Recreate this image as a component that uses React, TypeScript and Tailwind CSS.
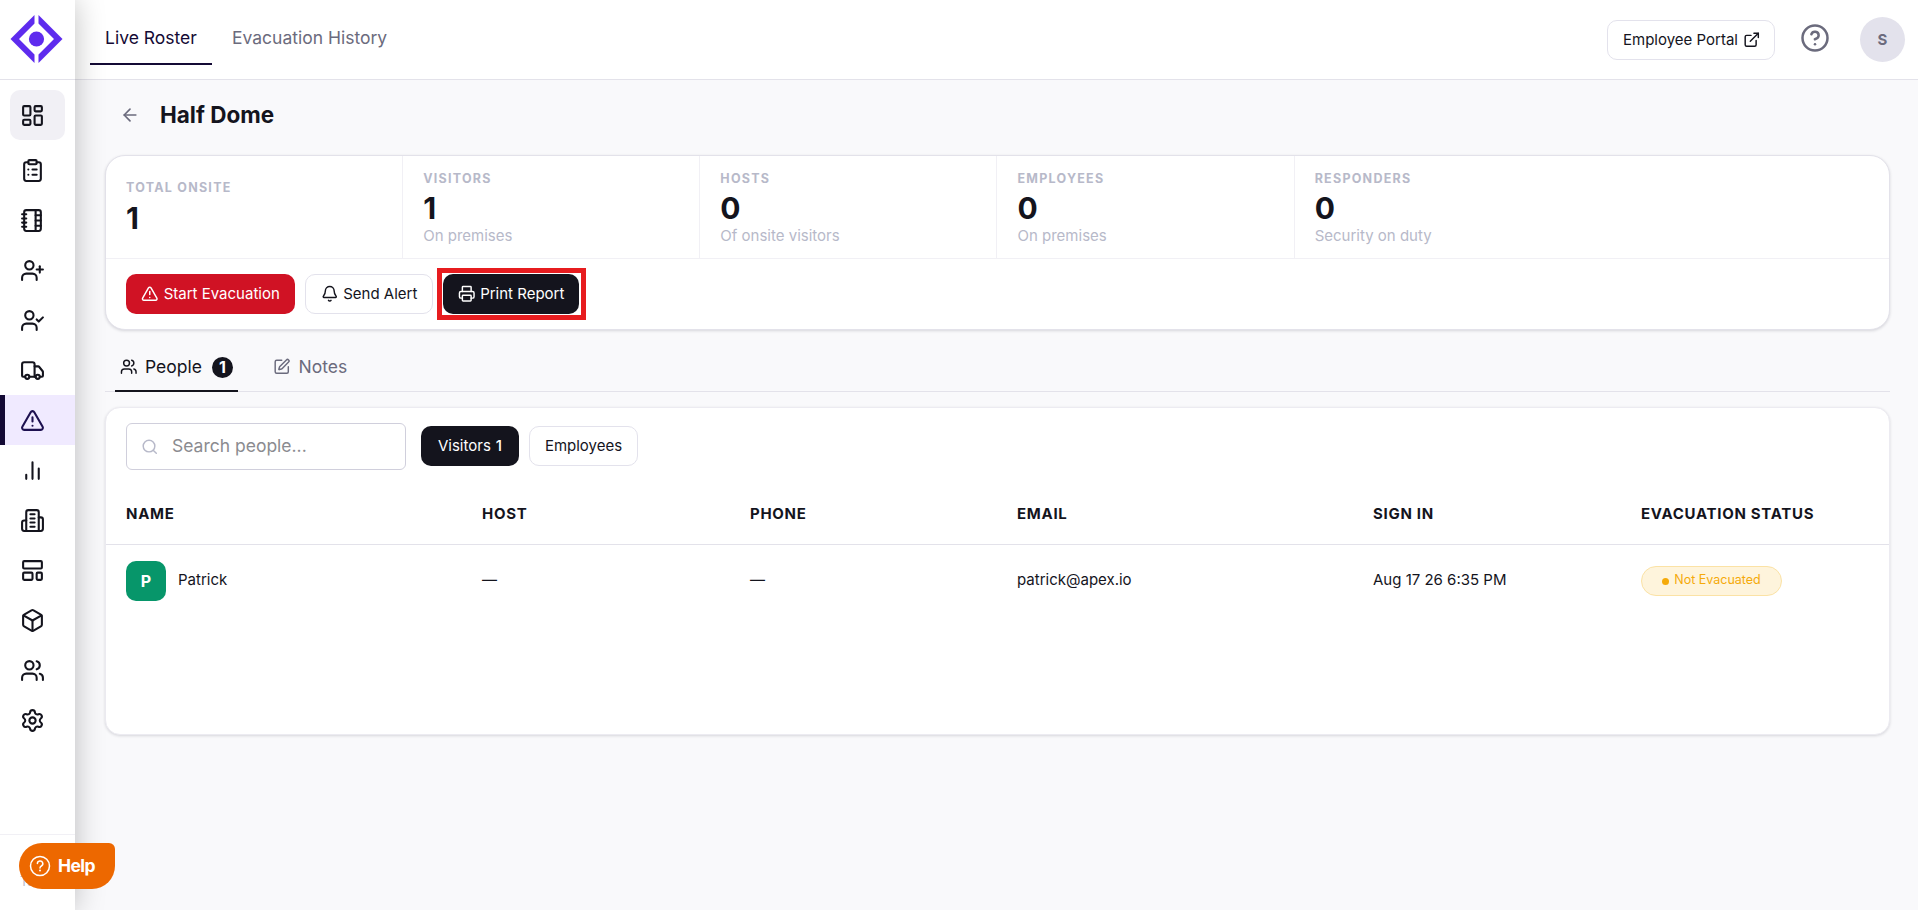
import React from "react";
import {
  LayoutDashboard, ClipboardList, NotebookTabs, UserPlus, UserCheck, Truck, TriangleAlert,
  LayoutTemplate, Box, Users, Settings, ArrowLeft, Bell, Printer, SquarePen, Search, ExternalLink, CircleQuestionMark,
} from "lucide-react";

const Bars = () => (
  <svg width="25" height="25" viewBox="0 0 24 24" fill="none" stroke="currentColor" strokeWidth="2" strokeLinecap="round">
    <path d="M18 20V10M12 20V4M6 20v-4" />
  </svg>
);

const Building = () => (
  <svg width="25" height="25" viewBox="0 0 24 24" fill="none" stroke="currentColor" strokeWidth="2" strokeLinecap="round" strokeLinejoin="round">
    <path d="M6 22V4a2 2 0 0 1 2-2h8a2 2 0 0 1 2 2v18Z" />
    <path d="M6 12H4a2 2 0 0 0-2 2v6a2 2 0 0 0 2 2h2M18 9h2a2 2 0 0 1 2 2v9a2 2 0 0 1-2 2h-2M10 6h4M10 10h4M10 14h4M10 18h4" />
  </svg>
);

const Logo = () => (
  <svg width="53" height="50" viewBox="0 0 53 50" fill="#5e2bee">
    <path d="M24.5 1V9.6L9 25L24.5 40.4V49L0.5 25Z" />
    <path d="M28.5 1V9.6L44 25L28.5 40.4V49L52.5 25Z" />
    <circle cx="26.5" cy="25" r="7.6" />
  </svg>
);

const navIcons = [
  <ClipboardList size={25} />, <NotebookTabs size={25} />, <UserPlus size={25} />, <UserCheck size={25} />, <Truck size={25} />,
  <TriangleAlert size={25} />, <Bars />, <Building />, <LayoutTemplate size={25} />, <Box size={25} />, <Users size={25} />, <Settings size={25} />,
];

const stats = [
  { label: "VISITORS", value: "1", sub: "On premises" },
  { label: "HOSTS", value: "0", sub: "Of onsite visitors" },
  { label: "EMPLOYEES", value: "0", sub: "On premises" },
  { label: "RESPONDERS", value: "0", sub: "Security on duty" },
];

function Sidebar() {
  return (
    <aside className="relative z-10 flex h-full w-[75px] shrink-0 flex-col bg-white shadow-[0_0_30px_rgba(0,0,0,0.25)]">
      <div className="h-20 border-b border-[#e3e2ea] pt-3.5 pl-2.5"><Logo /></div>
      <nav className="flex flex-col pt-2.5">
        <div className="mx-2.5 mb-[5px] flex h-[50px] items-center rounded-[10px] bg-[#f1f0f5] pl-2.5"><LayoutDashboard size={25} /></div>
        {navIcons.map((icon, i) => (
          <div key={i} className={i === 5 ? "flex h-[50px] items-center border-l-[5px] border-[#140a35] bg-[#f0eaff] pl-[15px] text-[#1d1050]" : "flex h-[50px] items-center pl-5"}>
            {icon}
          </div>
        ))}
      </nav>
      <div className="mt-auto h-[76px] border-t border-[#f1f0f5] pt-[37px] pl-5 text-[12.5px] leading-5 text-[#b7b9c9]">Tai</div>
    </aside>
  );
}

function Header() {
  return (
    <header className="flex h-20 shrink-0 items-center border-b border-[#e3e2ea] bg-white pr-[13px] pl-[15px] text-[17.5px]">
      <div className="mt-[11px] flex h-[54px] w-[122px] justify-center self-start border-b-2 border-[#140a35] text-[#140a35]"><span className="pt-[13px] leading-7">Live Roster</span></div>
      <div className="ml-5 self-start pt-6 leading-7 text-[#6b6b7d]">Evacuation History</div>
      <div className="ml-auto flex h-10 w-[168px] items-center gap-[5px] rounded-[10px] border border-[#e3e2ec] pl-[15px] text-[15px]"><span className="pt-px">Employee Portal</span><ExternalLink size={17.5} /></div>
      <CircleQuestionMark size={30} className="mb-[3px] ml-[25px] text-[#6b6b7d]" />
      <div className="ml-[30px] flex size-[45px] items-center justify-center rounded-full bg-[#e3e2ec] pt-px text-[15px] font-bold text-[#6b6b7d]">S</div>
    </header>
  );
}

function Summary() {
  return (
    <section className="mt-[15px] h-[175px] rounded-[20px] border border-[#e3e2ea] bg-white shadow-[0_1px_3px_rgba(20,20,40,0.15)]">
      <div className="grid h-[103px] grid-cols-6 border-b border-[#f1f0f5]">
        <div className="flex flex-col border-r border-[#f1f0f5] pt-[22px] pl-5">
          <div className="text-[12.5px] leading-5 font-bold tracking-[1.25px] text-[#b7b9c9]">TOTAL ONSITE</div>
          <div className="mt-px text-[30px] leading-[38px] font-bold">1</div>
        </div>
        {stats.map((s, i) => (
          <div key={s.label} className={i === 3 ? "col-span-2 flex flex-col pt-[13px] pl-5" : "flex flex-col border-r border-[#f1f0f5] pt-[13px] pl-5"}>
            <div className="text-[12.5px] leading-5 font-bold tracking-[1.25px] text-[#b7b9c9]">{s.label}</div>
            <div className="-mt-px text-[30px] leading-10 font-bold">{s.value}</div>
            <div className="-mt-[3px] text-[15px] leading-[22px] text-[#b7b9c9]">{s.sub}</div>
          </div>
        ))}
      </div>
      <div className="flex gap-2.5 pt-[15px] pl-5 text-[15px]">
        <button className="flex h-10 w-[169px] items-center justify-center gap-[5px] rounded-[10px] bg-[#d01224] text-white"><TriangleAlert size={17.5} />Start Evacuation</button>
        <button className="flex h-10 w-32 items-center justify-center gap-[5px] rounded-[10px] border border-[#e3e2ec]"><Bell size={17.5} />Send Alert</button>
        <div className="relative">
          <button className="flex h-10 w-[136px] items-center justify-center gap-[5px] rounded-[10px] bg-[#14141d] text-white"><Printer size={17.5} />Print Report</button>
          <div className="absolute -top-1.5 -left-1.5 h-[52px] w-[149px] border-[5px] border-[#e71c1f]" />
        </div>
      </div>
    </section>
  );
}

function People() {
  const cols = "grid grid-cols-[356px_268px_267px_356px_268px_1fr] pl-5";
  return (
    <section className="mt-[15px] h-[328px] rounded-[15px] border border-[#ecebf1] bg-white shadow-[0_1px_3px_rgba(20,20,40,0.15)]">
      <div className="flex items-start gap-[10px] pt-[15px] pl-5 text-[15px]">
        <div className="mr-[5px] flex h-[47px] w-[280px] items-center gap-[13.5px] rounded-[6px] border border-[#d0cfdc] pl-[14px] text-[17.5px] text-[#8b8b90]"><Search size={17.5} className="text-[#b7b9c9]" />Search people...</div>
        <button className="mt-[3px] flex h-10 w-[98px] items-center justify-center gap-[5px] rounded-[10px] bg-[#14141d] text-white">Visitors<span className="font-medium">1</span></button>
        <button className="mt-[3px] h-10 w-[109px] rounded-[10px] border border-[#e3e2ec]">Employees</button>
      </div>
      <div className={cols + " mt-[13px] h-[62px] items-center border-b border-[#e3e2ea] pt-px text-[15px] font-bold tracking-[0.7px]"}>
        <span>NAME</span><span>HOST</span><span>PHONE</span><span>EMAIL</span><span>SIGN IN</span><span>EVACUATION STATUS</span>
      </div>
      <div className={cols + " h-[72px] items-center text-[15px]"}>
        <div className="flex items-center gap-3"><div className="flex size-10 items-center justify-center rounded-[10px] bg-[#07966a] text-[16px] font-bold text-white">P</div><span className="mb-px">Patrick</span></div>
        <span className="mb-px">—</span><span className="mb-px">—</span><span className="mb-px">patrick@apex.io</span><span className="mb-px">Aug 17 26 6:35 PM</span>
        <div className="flex h-[30px] w-[141px] items-center justify-center gap-[5px] rounded-[15px] border border-[#fbe2a5] bg-[#fef4dc] text-[12.5px] text-[#f5aa0a]"><span className="size-[7px] rounded-full bg-[#f5aa0a]" /><span className="mb-px">Not Evacuated</span></div>
      </div>
    </section>
  );
}

export default function App() {
  return (
    <div className="relative flex h-[910px] w-full overflow-hidden bg-[#f9f9fb] font-['Inter',sans-serif] text-[#14141d]">
      <Sidebar />
      <div className="flex min-w-0 flex-1 flex-col">
        <Header />
        <main className="flex flex-col pr-7 pl-[30px]">
          <div className="flex h-[60px] items-center pt-2.5 pl-[15px]">
            <ArrowLeft size={20} className="text-[#6b6b7d]" />
            <h1 className="ml-5 text-[22.5px] font-bold">Half Dome</h1>
          </div>
          <Summary />
          <div className="mt-[13px] flex h-[49px] border-b border-[#e3e2ea] pl-2.5 text-[17.5px]">
            <div className="flex h-[49px] w-[123px] items-center border-b-2 border-[#14141d] pt-px pl-[5px]"><Users size={17.5} /><span className="ml-[7.5px]">People</span><span className="ml-2.5 flex size-[21px] items-center justify-center rounded-full bg-[#14141d] text-[16px] font-bold text-white">1</span></div>
            <div className="ml-[35px] flex h-12 items-center gap-2 text-[#6b6b7d]"><SquarePen size={17.5} />Notes</div>
          </div>
          <People />
        </main>
      </div>
      <button className="absolute top-[843px] left-[19px] z-20 flex h-[46px] w-24 items-center gap-[7px] rounded-[23px] rounded-tr-[6px] bg-[#ed6800] pl-2.5 text-[17.5px] font-bold tracking-[-0.6px] text-white">
        <svg width="22" height="22" viewBox="0 0 22 22" fill="none" stroke="white" strokeWidth="1.5" strokeLinecap="round"><circle cx="11" cy="11" r="9.5" /><path d="M8.4 8.6a2.7 2.7 0 1 1 4 2.4c-.9.5-1.4.9-1.4 1.9" /><path d="M11 15.4v.1" strokeWidth="1.9" /></svg>
        Help
      </button>
    </div>
  );
}
